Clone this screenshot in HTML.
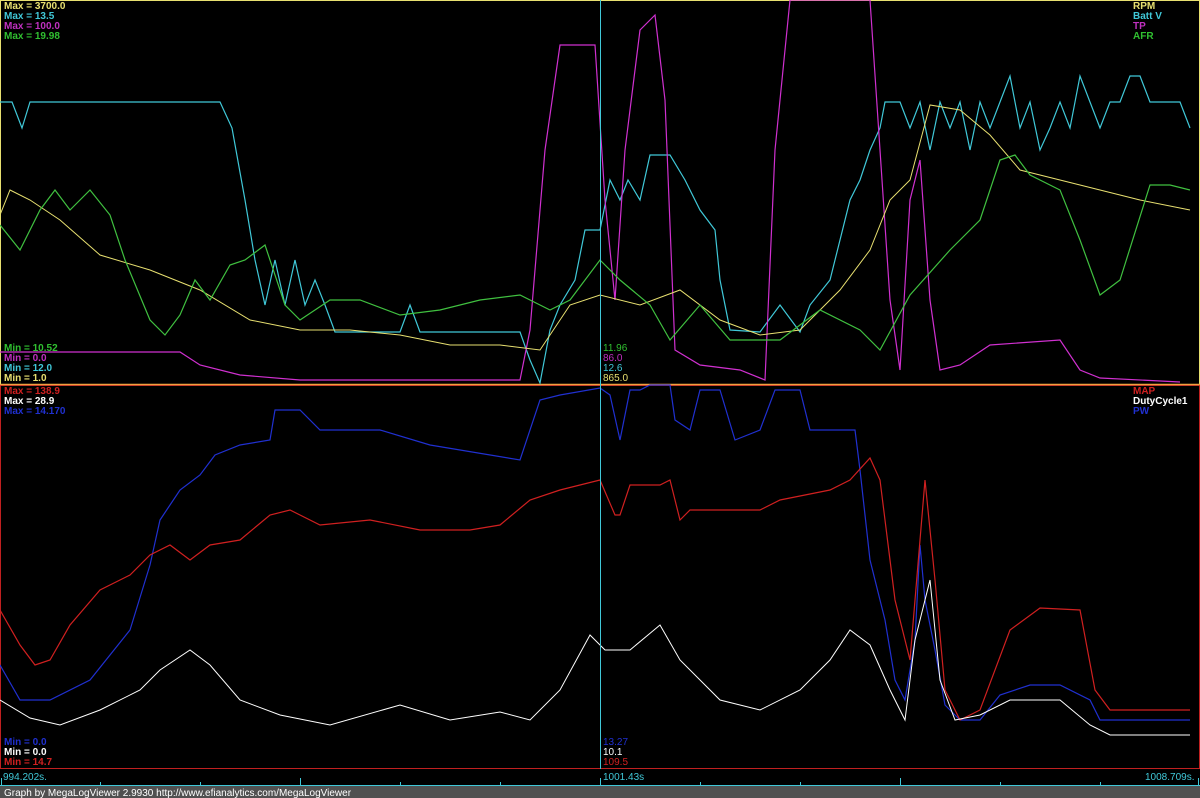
<!DOCTYPE html>
<html><head><meta charset="utf-8"><style>
body{margin:0;width:1200px;height:798px;background:#000;overflow:hidden;font-family:"Liberation Sans",sans-serif}
svg{position:absolute;left:0;top:0}
text{font-family:"Liberation Sans",sans-serif;font-size:10px}
.b{font-weight:bold}
</style></head><body>
<svg width="1200" height="798" viewBox="0 0 1200 798">
<rect x="0.5" y="0.5" width="1199" height="384" fill="#000" stroke="#e8e070"/>
<rect x="0.5" y="385.5" width="1199" height="383" fill="#000" stroke="#c02020"/>
<line x1="0" y1="384.5" x2="1200" y2="384.5" stroke="#f0a040" stroke-width="1.5"/>
<g fill="none" stroke-width="1.2">
<polyline stroke="#40c8d8" points="0,102 12,102 22,128 30,102 220,102 232,128 245,200 255,260 265,305 275,260 285,305 295,260 305,305 315,280 325,305 335,332 400,332 410,305 420,332 520,332 530,360 540,383 550,330 560,305 575,280 585,230 600,230 610,180 620,200 628,180 640,200 650,155 670,155 685,180 700,210 715,230 720,280 730,330 760,332 780,305 800,332 810,305 830,280 850,200 860,180 870,150 880,128 885,102 900,102 910,128 920,102 930,150 940,102 950,128 960,102 970,150 980,102 990,128 1000,102 1010,76 1020,128 1030,102 1040,150 1050,128 1060,102 1070,128 1080,76 1090,102 1100,128 1110,102 1120,102 1130,76 1140,76 1150,102 1180,102 1190,128"/>
<polyline stroke="#d030d0" points="0,352 180,352 200,365 240,375 300,380 520,380 530,330 545,150 560,45 595,45 605,200 615,300 625,150 640,30 655,15 665,100 675,350 700,365 740,370 765,380 775,150 790,0 870,0 880,150 890,300 900,370 910,200 920,160 930,300 940,370 960,365 990,345 1060,340 1080,370 1100,378 1180,382"/>
<polyline stroke="#e8e070" stroke-width="1" points="0,215 10,190 30,200 60,220 100,255 150,270 200,290 250,320 300,330 350,330 400,335 450,345 500,345 540,350 570,305 600,295 640,305 680,290 720,320 760,335 800,330 840,290 870,250 890,200 910,180 930,105 960,110 990,135 1020,170 1060,180 1100,190 1140,200 1190,210"/>
<polyline stroke="#40c040" points="0,225 20,250 40,210 55,190 70,210 90,190 110,215 125,260 150,320 165,335 180,315 195,280 210,300 230,265 245,260 265,245 285,305 300,320 330,300 360,300 400,315 440,310 480,300 520,295 550,310 570,300 600,260 620,280 650,305 670,340 700,305 730,340 780,340 820,310 860,330 880,350 910,295 950,250 980,220 1000,160 1015,155 1030,175 1060,190 1080,240 1100,295 1120,280 1150,185 1170,185 1190,190"/>
<polyline stroke="#2030d0" points="0,665 20,700 50,700 90,680 130,630 150,565 160,520 180,490 200,475 215,455 240,445 270,440 275,410 300,410 320,430 380,430 430,445 520,460 540,400 560,395 600,388 610,395 620,440 630,390 640,390 650,385 670,385 675,420 690,430 700,390 720,390 735,440 760,430 775,390 800,390 810,430 855,430 860,470 870,560 885,620 895,680 905,700 915,640 920,545 925,600 935,650 945,705 960,720 980,720 1000,695 1030,685 1060,685 1090,700 1100,720 1190,720"/>
<polyline stroke="#d02020" points="0,610 20,645 35,665 50,660 70,625 100,590 130,575 150,555 170,545 190,560 210,545 240,540 270,515 290,510 320,525 370,520 420,530 470,530 500,525 530,500 560,490 600,480 615,515 620,515 630,485 660,485 670,480 680,520 690,510 760,510 780,500 830,490 850,480 870,458 880,480 895,600 910,660 925,480 935,580 945,690 960,720 980,710 1010,630 1040,608 1080,610 1095,690 1110,710 1190,710"/>
<polyline stroke="#ffffff" stroke-width="1" points="0,700 30,718 60,725 100,710 140,690 160,670 190,650 210,665 240,700 280,715 330,725 400,705 450,720 500,712 530,720 560,690 590,635 605,650 630,650 660,625 680,660 720,700 760,710 800,690 830,660 850,630 870,645 890,690 905,720 915,640 930,580 940,680 955,720 980,715 1010,700 1060,700 1090,725 1110,735 1190,735"/>
</g>
<line x1="600.5" y1="0" x2="600.5" y2="786" stroke="#40c8d8"/>
<g class="b">
<text x="4" y="9" fill="#e8e070">Max = 3700.0</text>
<text x="4" y="19" fill="#40c8d8">Max = 13.5</text>
<text x="4" y="29" fill="#c030c0">Max = 100.0</text>
<text x="4" y="39" fill="#30c030">Max = 19.98</text>
<text x="4" y="351" fill="#30c030">Min = 10.52</text>
<text x="4" y="361" fill="#c030c0">Min = 0.0</text>
<text x="4" y="371" fill="#40c8d8">Min = 12.0</text>
<text x="4" y="381" fill="#e8e070">Min = 1.0</text>
<text x="1133" y="9" fill="#e8e070">RPM</text>
<text x="1133" y="19" fill="#40c8d8">Batt V</text>
<text x="1133" y="29" fill="#c030c0">TP</text>
<text x="1133" y="39" fill="#30c030">AFR</text>
<text x="4" y="394" fill="#d02020">Max = 138.9</text>
<text x="4" y="404" fill="#ffffff">Max = 28.9</text>
<text x="4" y="414" fill="#2030d0">Max = 14.170</text>
<text x="1133" y="394" fill="#d02020">MAP</text>
<text x="1133" y="404" fill="#ffffff">DutyCycle1</text>
<text x="1133" y="414" fill="#2030d0">PW</text>
<text x="4" y="745" fill="#2030d0">Min = 0.0</text>
<text x="4" y="755" fill="#ffffff">Min = 0.0</text>
<text x="4" y="765" fill="#d02020">Min = 14.7</text>
</g>
<text x="603" y="351" fill="#30c030">11.96</text>
<text x="603" y="361" fill="#c030c0">86.0</text>
<text x="603" y="371" fill="#40c8d8">12.6</text>
<text x="603" y="381" fill="#e8e070">865.0</text>
<text x="603" y="745" fill="#2030d0">13.27</text>
<text x="603" y="755" fill="#ffffff">10.1</text>
<text x="603" y="765" fill="#d02020">109.5</text>
<rect x="0" y="769" width="1200" height="17" fill="#000"/>
<line x1="0" y1="785.5" x2="1200" y2="785.5" stroke="#40c8d8"/>
<g stroke="#40c8d8">
<line x1="1.5" y1="778" x2="1.5" y2="786"/><line x1="100.5" y1="782" x2="100.5" y2="786"/><line x1="200.5" y1="782" x2="200.5" y2="786"/><line x1="300.5" y1="778" x2="300.5" y2="786"/><line x1="400.5" y1="782" x2="400.5" y2="786"/><line x1="500.5" y1="782" x2="500.5" y2="786"/><line x1="600.5" y1="778" x2="600.5" y2="786"/><line x1="700.5" y1="782" x2="700.5" y2="786"/><line x1="800.5" y1="782" x2="800.5" y2="786"/><line x1="900.5" y1="778" x2="900.5" y2="786"/><line x1="1000.5" y1="782" x2="1000.5" y2="786"/><line x1="1100.5" y1="782" x2="1100.5" y2="786"/><line x1="1198.5" y1="778" x2="1198.5" y2="786"/>
</g>
<text x="3" y="780" fill="#40c8d8">994.202s.</text>
<text x="603" y="780" fill="#40c8d8">1001.43s</text>
<text x="1145" y="780" fill="#40c8d8">1008.709s.</text>
<rect x="0" y="786" width="1200" height="12" fill="#505050"/>
<text x="4" y="796" fill="#ffffff">Graph by MegaLogViewer 2.9930 http://www.efianalytics.com/MegaLogViewer</text>
</svg>
</body></html>
